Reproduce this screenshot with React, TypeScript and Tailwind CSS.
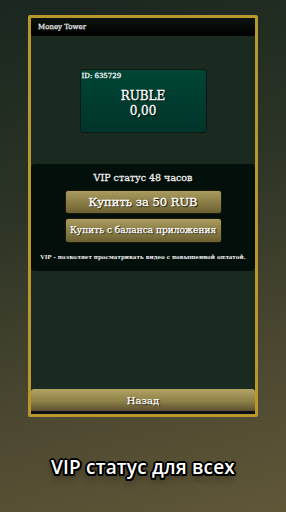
import React from "react";

export default function App() {
  return (
    <div className="w-[286px] h-[512px] overflow-hidden bg-[linear-gradient(165deg,#1a271f_0%,#2a3325_35%,#4a4630_70%,#605737_100%)] flex flex-col items-center font-['DejaVu_Serif','Liberation_Serif',serif]">
      <div className="mt-[15px] w-[230px] h-[402px] border-[3px] border-[#b8982c] rounded-[2px] bg-[#1b2a20] flex flex-col">
        <div className="h-[18px] bg-[linear-gradient(to_bottom,#0b140e,#000)] flex items-center pl-[7px] text-[7px] text-[#eeeeee] rounded-b-[2px] [-webkit-text-stroke:0.25px_#eeeeee]">
          Money Tower
        </div>
        <div className="flex justify-center mt-[33px]">
          <div className="w-[127px] h-[64px] rounded-[3px] border border-[#0c1812] bg-[linear-gradient(to_bottom,#004534,#01342a)] flex flex-col">
            <div className="text-[7px] text-white pl-[1px] pt-[2px] leading-[9px] [-webkit-text-stroke:0.25px_#fff]">
              ID: 635729
            </div>
            <div className="flex flex-col items-center mt-[8px] text-white text-[12px] leading-[15px] [-webkit-text-stroke:0.3px_#fff] [text-shadow:1px_1px_1px_#000]">
              <div>RUBLE</div>
              <div>0,00</div>
            </div>
          </div>
        </div>
        <div className="mt-[31px] h-[107px] rounded-[4px] bg-[#030f0a] flex flex-col items-center">
          <div className="mt-[7px] text-[9.5px] text-[#eeeeee] [-webkit-text-stroke:0.3px_#eeeeee] [text-shadow:1px_1px_1px_#000]">
            VIP статус 48 часов
          </div>
          <div className="mt-[5px] w-[157px] h-[24px] rounded-[3px] border border-[#1d1a0c] bg-[linear-gradient(to_bottom,#aa9b5e,#6c6132)] flex items-center justify-center text-[11.5px] text-white [-webkit-text-stroke:0.3px_#fff] [text-shadow:1px_1px_1px_#000]">
            Купить за 50 RUB
          </div>
          <div className="mt-[4px] w-[157px] h-[25px] rounded-[3px] border border-[#1d1a0c] bg-[linear-gradient(to_bottom,#aa9b5e,#6c6132)] flex items-center justify-center text-[9px] text-white [-webkit-text-stroke:0.25px_#fff] [text-shadow:1px_1px_1px_#000] whitespace-nowrap">
            Купить с баланса приложения
          </div>
          <div className="mt-[10px] text-[5.6px] font-bold text-[#eeeeee] whitespace-nowrap">
            VIP - позволяет просматривать видео с повышенной оплатой.
          </div>
        </div>
        <div className="flex-1" />
        <div className="h-[25px] bg-[linear-gradient(to_bottom,#b2a364_0%,#8c7f47_50%,#5a5030_88%,#0e0f14_90%,#0e0f14_100%)] rounded-t-[3px] flex items-center justify-center pb-[2px]">
          <span className="text-[10px] text-white [-webkit-text-stroke:0.25px_#fff] [text-shadow:1px_1px_1px_#000]">Назад</span>
        </div>
      </div>
      <div className="mt-[36px] text-[19px] text-white font-semibold tracking-[0.2px] font-['Open_Sans','DejaVu_Sans',sans-serif] [text-shadow:-1.5px_-1.5px_0_#000,1.5px_-1.5px_0_#000,-1.5px_1.5px_0_#000,1.5px_1.5px_0_#000,0_2px_0_#000,0_-2px_0_#000,2px_0_0_#000,-2px_0_0_#000,0_6px_6px_rgba(0,0,0,0.4)]">
        VIP статус для всех
      </div>
    </div>
  );
}
